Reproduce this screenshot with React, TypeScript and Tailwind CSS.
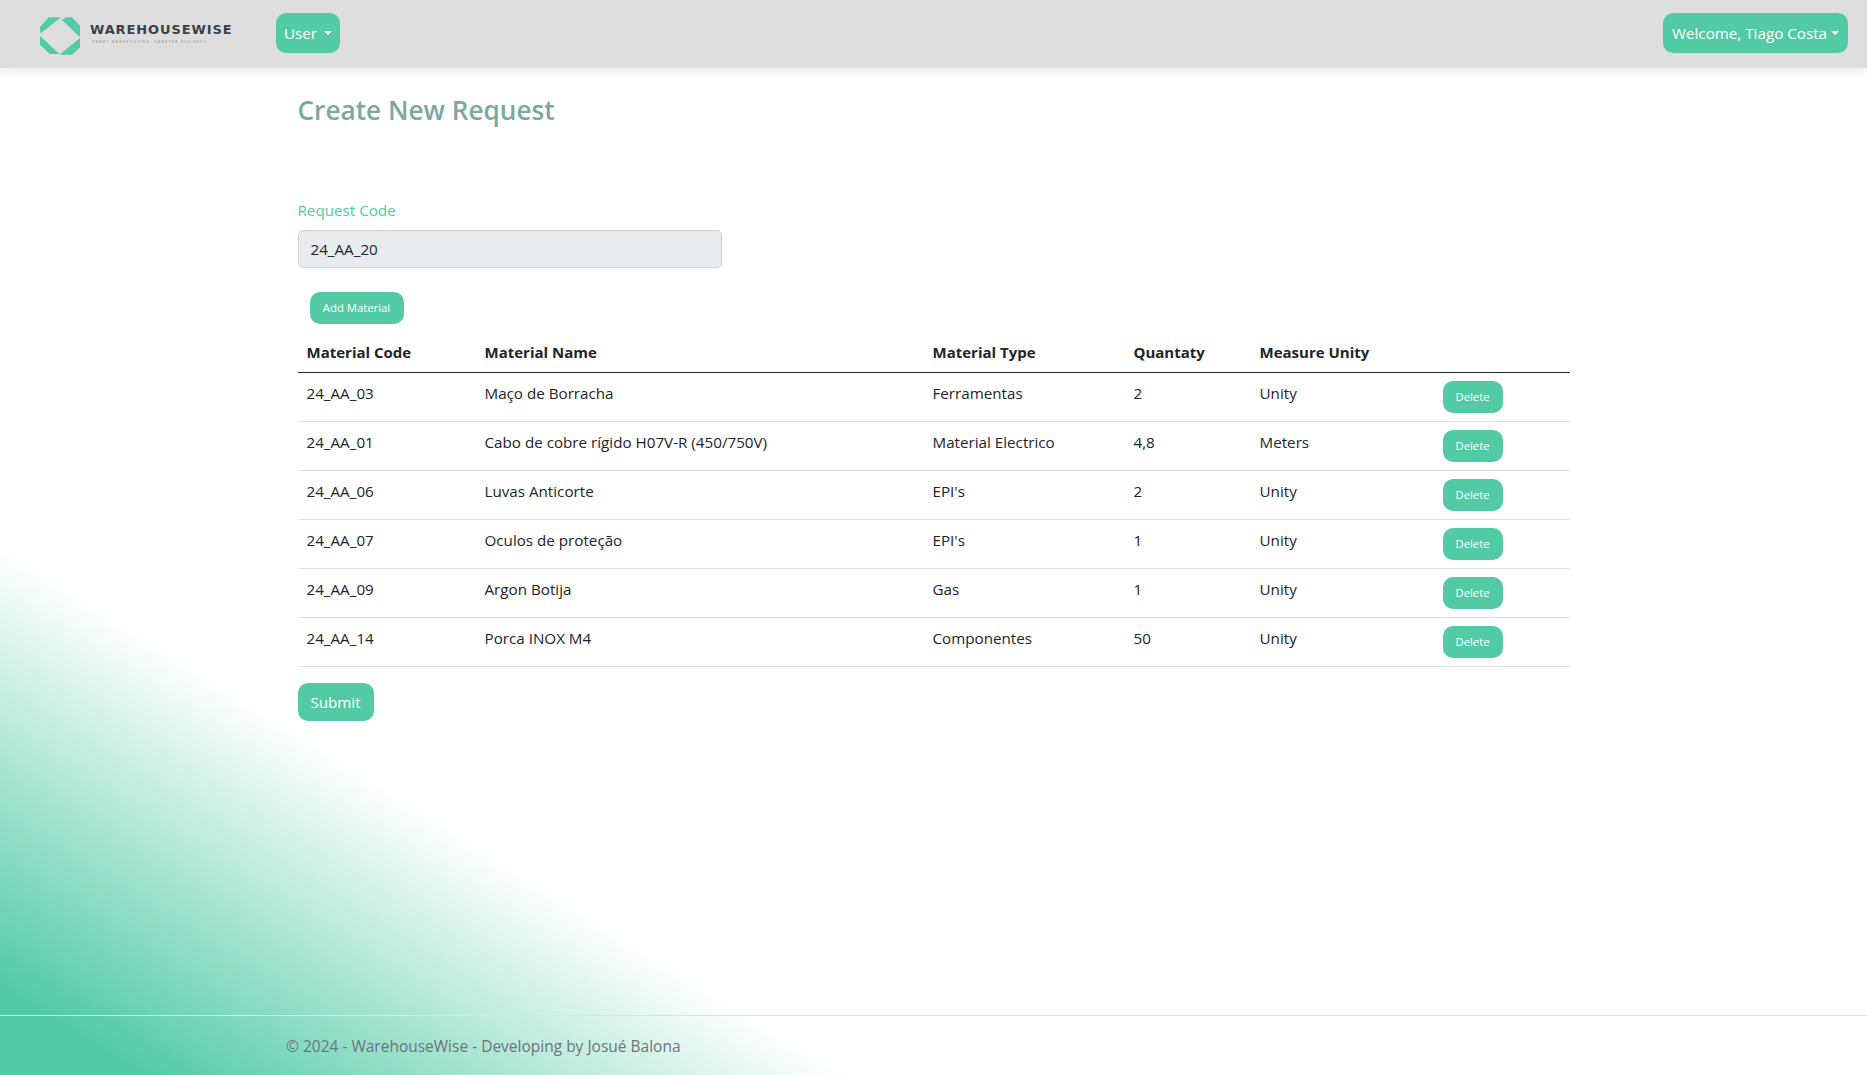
const materials = [
  { code: "24_AA_03", name: "Maço de Borracha", type: "Ferramentas", qty: "2", unit: "Unity" },
  { code: "24_AA_01", name: "Cabo de cobre rígido H07V-R (450/750V)", type: "Material Electrico", qty: "4,8", unit: "Meters" },
  { code: "24_AA_06", name: "Luvas Anticorte", type: "EPI's", qty: "2", unit: "Unity" },
  { code: "24_AA_07", name: "Oculos de proteção", type: "EPI's", qty: "1", unit: "Unity" },
  { code: "24_AA_09", name: "Argon Botija", type: "Gas", qty: "1", unit: "Unity" },
  { code: "24_AA_14", name: "Porca INOX M4", type: "Componentes", qty: "50", unit: "Unity" },
];

function Caret({ gap }: { gap: string }) {
  return (
    <span className={`${gap} inline-block border-x-[4px] border-t-[4px] border-x-transparent border-t-white`} />
  );
}

function Logo() {
  return (
    <div className="mt-[6px] flex items-center">
      <svg width="40" height="38" viewBox="0 0 40 38" className="shrink-0">
        <path d="M0 10 L8.7 .3 H21 L.5 16.5 Z" fill="#52cba4" />
        <path d="M22 3 L26 .3 H32 L40 8.7 V20.3 Z" fill="#52cba4" />
        <path d="M0 19 L19.3 37 H10 L0 27.7 Z" fill="#52cba4" />
        <path d="M40 21 V30.3 L32 37.7 H19.3 Z" fill="#52cba4" />
      </svg>
      <div className="mb-[4px] ml-[10px] flex w-[142px] flex-col">
        <span className="font-['DejaVu_Sans'] text-[13px] leading-[12px] font-bold tracking-[0.9px] whitespace-nowrap text-[#3c4048]">
          WAREHOUSEWISE
        </span>
        <span className="mt-[4px] ml-[2px] font-['Liberation_Sans'] text-[3px] leading-[4px] tracking-[1.4px] whitespace-nowrap text-[#8d8d8d]">
          SMART WAREHOUSING. SMARTER BUSINESS.
        </span>
      </div>
    </div>
  );
}

export default function App() {
  return (
    <div className="flex min-h-screen flex-col bg-[linear-gradient(32deg,#52cba4_4%,#ffffff_23.6%)] font-['Open_Sans',sans-serif] text-[15.2px] text-[#212529]">
      <header className="flex h-[68px] items-center justify-between bg-[#dedede] pr-[19px] pb-[2px] pl-[40px] shadow-[0_4px_8px_rgba(0,0,0,0.08)]">
        <div className="flex items-center">
          <Logo />
          <button className="ml-[44px] flex h-[40px] w-[64px] items-center justify-center rounded-[10px] bg-[#52cba4] text-white">
            User
            <Caret gap="ml-[7px]" />
          </button>
        </div>
        <button className="flex h-[40px] w-[185px] items-center justify-center rounded-[10px] bg-[#52cba4] text-white">
          Welcome, Tiago Costa
          <Caret gap="ml-[4px]" />
        </button>
      </header>

      <main className="mx-auto w-[1272px] flex-1">
        <h2 className="mt-[25px] text-[26.2px] leading-[34px] font-semibold text-[#7ba99c]">Create New Request</h2>

        <label className="mt-[71px] block leading-[24px] text-[#52cba4]">Request Code</label>
        <div className="mt-[8px] flex h-[38px] w-[424px] items-center rounded-[5px] border border-[#ced4da] bg-[#e9ecef] px-[12px]">
          24_AA_20
        </div>

        <button className="mt-[24px] ml-[12px] h-[32px] w-[94px] rounded-[10px] bg-[#52cba4] pt-[1px] text-[11.3px] font-medium text-white">
          Add Material
        </button>

        <table className="mt-[8px] w-full table-fixed border-collapse">
          <thead>
            <tr className="h-[40px] border-b border-[#212529] text-left text-[15px]">
              <th className="w-[178px] pr-[8px] pl-[9px] font-bold">Material Code</th>
              <th className="w-[449px] pr-[8px] pl-[9px] font-bold">Material Name</th>
              <th className="w-[201px] px-[8px] font-bold">Material Type</th>
              <th className="w-[126px] px-[8px] font-bold">Quantaty</th>
              <th className="w-[183px] px-[8px] font-bold">Measure Unity</th>
              <th />
            </tr>
          </thead>
          <tbody>
            {materials.map((m) => (
              <tr key={m.code} className="h-[49px] border-b border-[#dee2e6]">
                <td className="pt-[9px] pr-[8px] pb-[15px] pl-[9px]">{m.code}</td>
                <td className="pt-[9px] pr-[8px] pb-[15px] pl-[9px]">{m.name}</td>
                <td className="px-[8px] pt-[9px] pb-[15px]">{m.type}</td>
                <td className="px-[8px] pt-[9px] pb-[15px]">{m.qty}</td>
                <td className="px-[8px] pt-[9px] pb-[15px]">{m.unit}</td>
                <td className="px-[8px]">
                  <button className="mt-[1px] block h-[32px] w-[60px] rounded-[10px] bg-[#52cba4] pt-[1px] text-[11.3px] font-medium text-white">
                    Delete
                  </button>
                </td>
              </tr>
            ))}
          </tbody>
        </table>

        <button className="mt-[16px] h-[38px] w-[76px] rounded-[10px] bg-[#52cba4] pt-[1px] text-white">Submit</button>
      </main>

      <footer className="h-[60px] border-t border-[#dee2e6] pt-[3px]">
        <div className="mx-auto flex h-full w-[1295px] items-center text-[15.5px] text-[#6c757d]">
          © 2024 - WarehouseWise - Developing by Josué Balona
        </div>
      </footer>
    </div>
  );
}
